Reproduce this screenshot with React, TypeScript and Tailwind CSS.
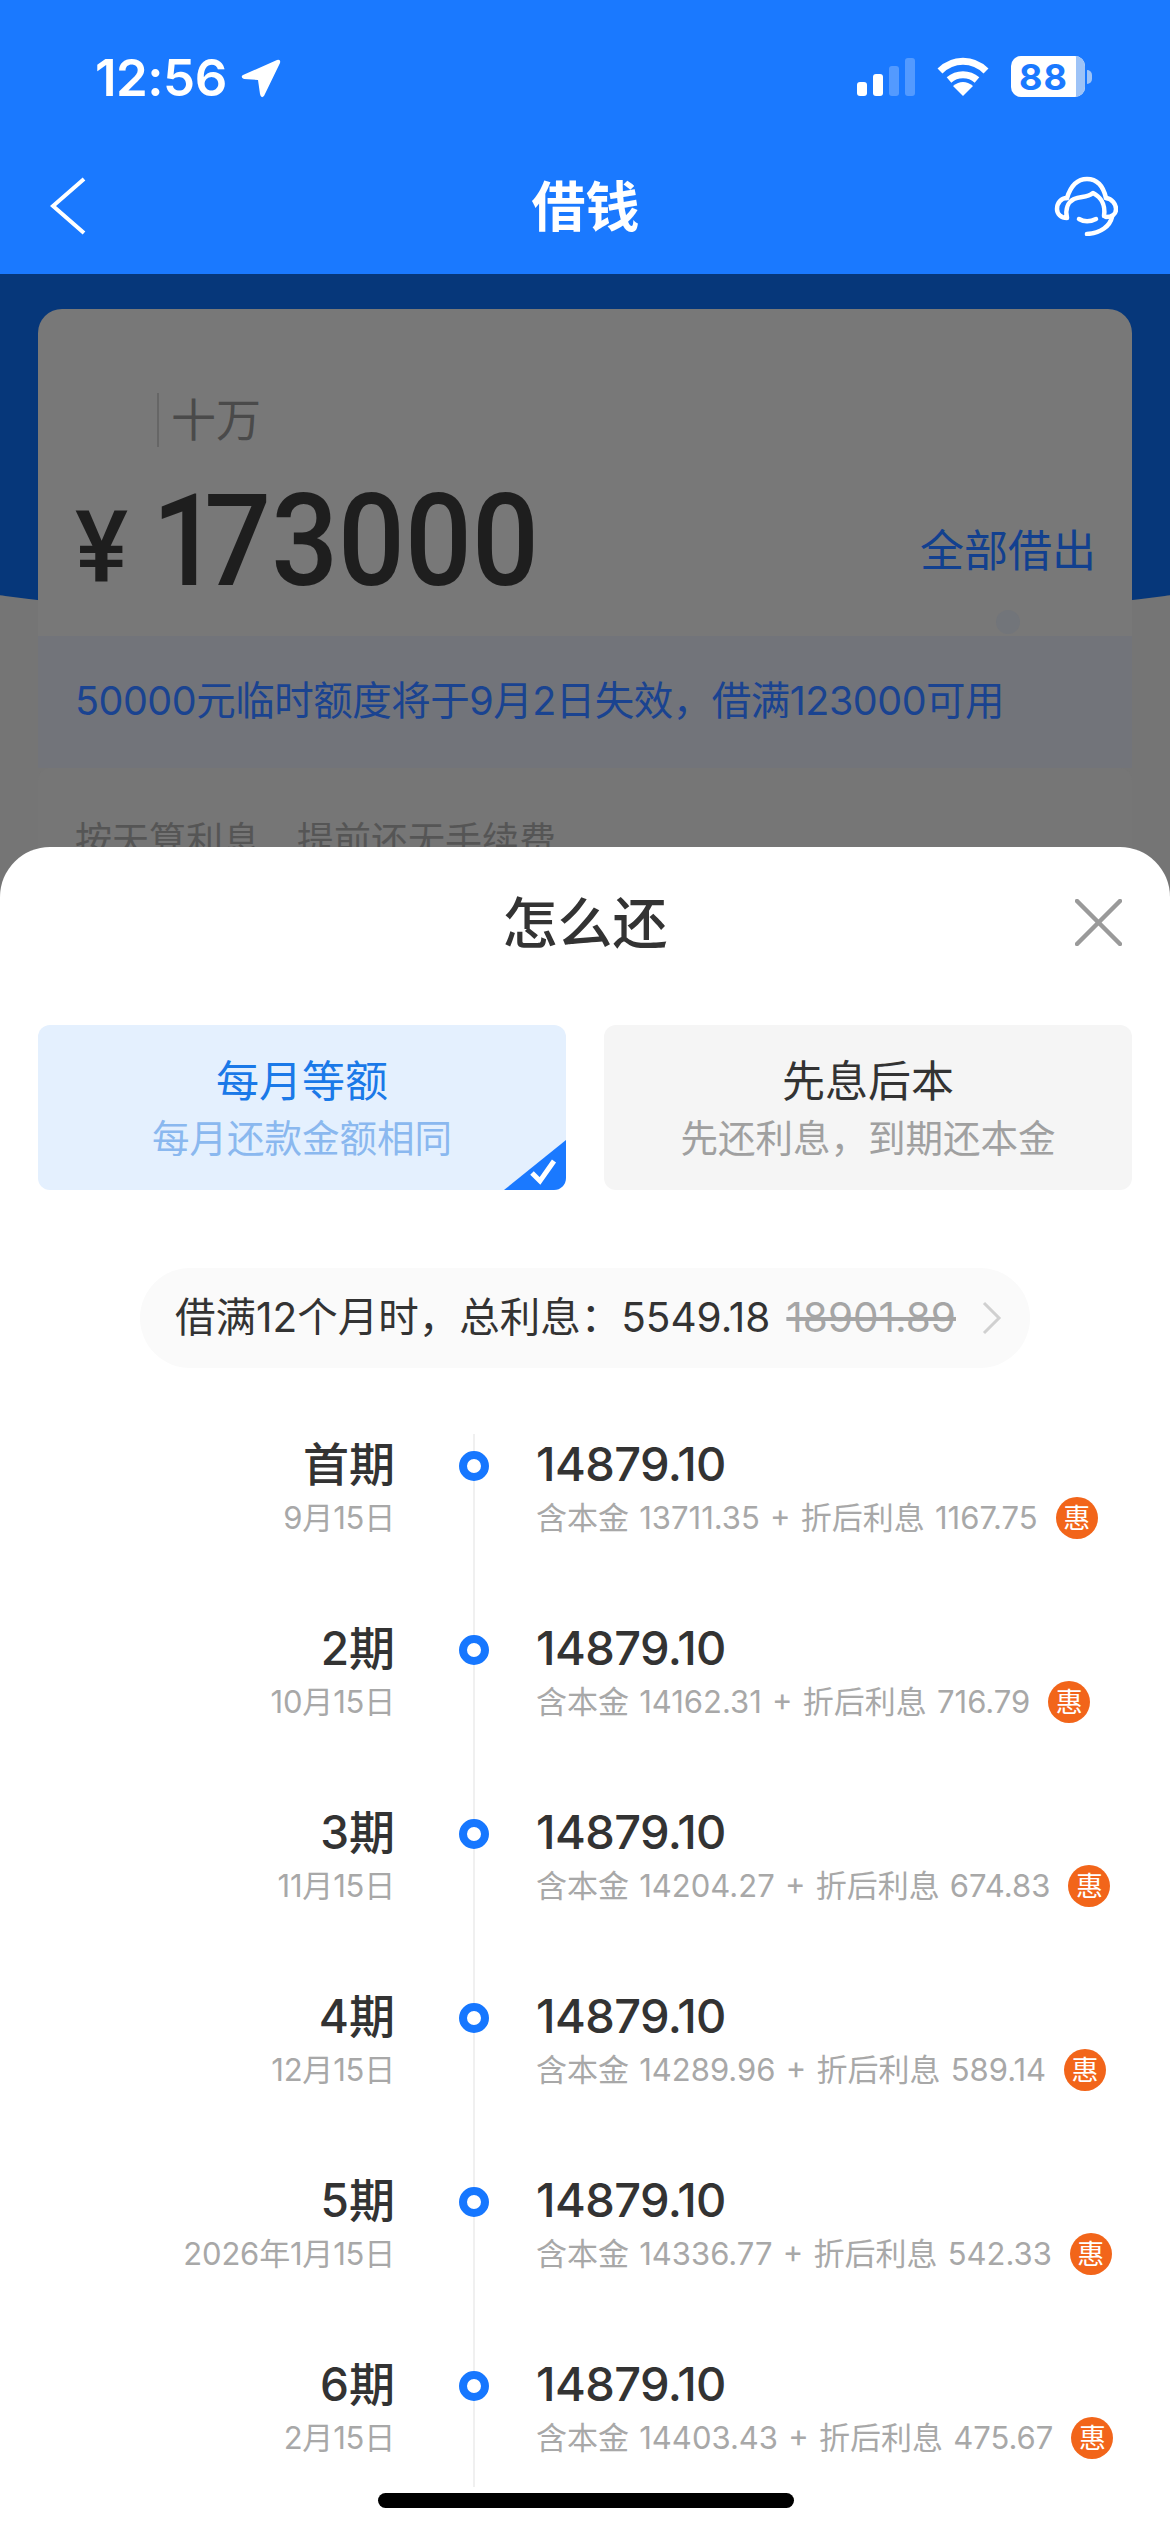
const rows = [
  { p: "首期", d: "9月15日", a: "13711.35", b: "1167.75" },
  { p: "2期", d: "10月15日", a: "14162.31", b: "716.79" },
  { p: "3期", d: "11月15日", a: "14204.27", b: "674.83" },
  { p: "4期", d: "12月15日", a: "14289.96", b: "589.14" },
  { p: "5期", d: "2026年1月15日", a: "14336.77", b: "542.33" },
  { p: "6期", d: "2月15日", a: "14403.43", b: "475.67" },
];

function Row({ r }: { r: (typeof rows)[number] }) {
  return (
    <div className="relative flex h-[184px]">
      <div className="w-[395px] text-right">
        <div className="h-[60px] text-[46px] leading-[60px] font-medium text-[#333333]">{r.p}</div>
        <div className="h-[48px] text-[31px] leading-[48px] tracking-[-0.2px] text-[#a8a8a8]">{r.d}</div>
      </div>
      <div className="w-[141px] pl-[64px] pt-[17px]">
        <div className="h-[30px] w-[30px] rounded-full border-[8px] border-[#1677ff] bg-white" />
      </div>
      <div>
        <div className="h-[60px] text-[47px] leading-[60px] font-medium tracking-[-0.6px] text-[#333333]">14879.10</div>
        <div className="flex h-[48px] items-center text-[31px] leading-[48px] [word-spacing:1.5px] text-[#a8a8a8]">
          <span>含本金 {r.a} + 折后利息 {r.b}</span>
          <span className="ml-[18px] flex h-[42px] w-[42px] items-center justify-center rounded-full bg-[#f2651a] text-[27px] leading-none text-white">惠</span>
        </div>
      </div>
    </div>
  );
}

export default function App() {
  return (
    <div className="flex h-[2532px] w-[1170px] flex-col overflow-hidden bg-white font-[Inter,'Noto_Sans_CJK_SC',sans-serif]">
      <header className="h-[274px] shrink-0 bg-[#1a79ff] text-white">
        <div className="flex h-[156px] items-start justify-between pl-[95px] pr-[78px] pt-[50px]">
          <div className="flex items-start gap-[14px]">
            <span className="text-[51px] leading-[56px] font-semibold tracking-[-0.5px]">12:56</span>
            <svg className="mt-[9px]" width="40" height="40" viewBox="0 0 40 40" fill="white">
              <path d="M36 1 Q40 0 39 4 L23 37 Q20 40 19 35 L17 21 L3 20 Q-1 18 2 16 Z" />
            </svg>
          </div>
          <div className="flex items-start gap-[22px] pt-[6px]">
            <svg width="58" height="40" viewBox="0 0 58 40" className="mt-[2px]">
              <rect x="0" y="24" width="10" height="14" rx="3" fill="white" />
              <rect x="16" y="16" width="10" height="22" rx="3" fill="white" />
              <rect x="32" y="8" width="10" height="30" rx="3" fill="white" fillOpacity="0.25" />
              <rect x="48" y="0" width="10" height="38" rx="3" fill="white" fillOpacity="0.25" />
            </svg>
            <svg width="52" height="40" viewBox="0 0 52 40" className="mt-[1px]" fill="none" stroke="white" strokeWidth="7">
              <path d="M3 14 C16 1 36 1 49 14" />
              <path d="M12 23 C20 16 32 16 40 23" />
              <path d="M16 29 L26 39 L36 29 Q26 21 16 29 Z" fill="white" stroke="none" />
            </svg>
            <div className="flex items-center">
              <div className="flex h-[41px] w-[74px] items-center overflow-hidden rounded-[10px] bg-white">
                <div className="flex h-full w-[65px] items-center justify-center text-[36px] leading-none font-bold tracking-[1px] text-[#1a79ff]">88</div>
                <div className="h-full flex-1 bg-[#9dc3f7]" />
              </div>
              <div className="ml-[2px] h-[14px] w-[5px] rounded-r-[5px] bg-[#9dc3f7]" />
            </div>
          </div>
        </div>
        <div className="flex h-[100px] items-center justify-between pl-[50px] pr-[52px]">
          <div className="w-[64px]">
            <svg width="36" height="58" viewBox="0 0 36 58" fill="none" stroke="white" strokeWidth="4">
              <path d="M34 2 L3 29 L34 56" />
            </svg>
          </div>
          <span className="ml-[3px] mt-[4px] text-[54px] leading-none font-semibold">借钱</span>
          <svg width="64" height="60" viewBox="0 0 64 60" fill="none" stroke="white" strokeWidth="4.5" strokeLinecap="round" strokeLinejoin="round">
            <path d="M13 22 C17 9 24 3 33 3 C42 3 49 9 52 22" />
            <path d="M13 22 C7 22 3 27 3 33 C3 38 7 42 13 42 C11 33 14 26 20 23 C27 20 33 22 39 17 C45 20 52 27 50 40" />
            <path d="M52 22 C58 23 62 28 62 33 C62 38 58 41 52 41" />
            <path d="M58 41 C56 50 47 57 33 58" />
            <path d="M25 43 C30 46 36 46 42 43" />
          </svg>
        </div>
      </header>

      <div className="relative h-[633px] shrink-0 overflow-hidden bg-[#757575]">
        <div className="absolute left-[-165px] top-0 h-[352px] w-[1500px] rounded-b-[750px_82px] bg-[#06377a]" />
        <div className="relative mx-[38px] mt-[35px]">
          <div className="relative h-[327px] rounded-t-[24px] bg-[#787878] pl-[40px] pr-[36px] pt-[84px]">
            <div className="ml-[79px] flex h-[54px] items-center border-l-2 border-[#666666] pl-[12px] text-[45px] leading-none text-[#4a4a4a]">十万</div>
            <div className="mt-[39px] flex items-center justify-between">
              <div className="flex items-start font-[Roboto,sans-serif] font-medium text-[#1e1e1e]">
                <span className="ml-[-3px] mt-[7px] w-[77px] text-[100px] leading-[110px]">¥</span>
                <span className="inline-block origin-left scale-x-[0.92] text-[128px] leading-[110px]">
                  <span className="tracking-[-16px]">1</span>73000
                </span>
              </div>
              <span className="mt-[12px] text-[44px] leading-none text-[#12408f]">全部借出</span>
            </div>
            <div className="absolute bottom-[2px] left-[958px] h-[24px] w-[24px] rounded-full bg-[#72757a]" />
          </div>
          <div className="flex h-[132px] items-center bg-[#72747a] pl-[37px] text-[39.5px] leading-none tracking-[-0.5px] text-[#1a4390]">50000元临时额度将于9月2日失效&#xFF0C;借满123000可用</div>
          <div className="h-[120px] rounded-t-[12px] bg-[#767676] pl-[37px] pt-[54px] text-[37px] leading-none text-[#555555]">按天算利息&#x3000;提前还无手续费</div>
        </div>
      </div>

      <main className="relative z-10 -mt-[60px] flex-1 overflow-hidden rounded-t-[50px] bg-white">
        <div className="relative flex h-[152px] items-center justify-center">
          <h1 className="text-[55px] leading-none font-medium text-[#333333]">怎么还</h1>
          <svg className="absolute left-[1075px] top-[52px]" width="47" height="47" viewBox="0 0 47 47" stroke="#9a9a9a" strokeWidth="4.5" strokeLinecap="round">
            <path d="M2 2 L45 45" />
            <path d="M45 2 L2 45" />
          </svg>
        </div>

        <div className="mx-[38px] mt-[26px] flex gap-[38px]">
          <div className="relative flex h-[165px] flex-1 flex-col items-center overflow-hidden rounded-[12px] bg-[#e4f0fe] pt-[30px]">
            <div className="text-[43px] leading-[52px] text-[#1a79e8]">每月等额</div>
            <div className="mt-[9px] text-[37.5px] leading-[46px] text-[#8ab8ef]">每月还款金额相同</div>
            <svg className="absolute bottom-0 right-0" width="62" height="50" viewBox="0 0 62 50">
              <path d="M62 0 L62 50 L0 50 Z" fill="#1a79ff" />
              <path d="M28 33 L36 41 L50 21" fill="none" stroke="white" strokeWidth="5" />
            </svg>
          </div>
          <div className="flex h-[165px] flex-1 flex-col items-center rounded-[12px] bg-[#f5f5f5] pt-[30px]">
            <div className="text-[43px] leading-[52px] text-[#333333]">先息后本</div>
            <div className="mt-[9px] text-[37.5px] leading-[46px] text-[#a0a0a0]">先还利息&#xFF0C;到期还本金</div>
          </div>
        </div>

        <div className="mx-[140px] mt-[78px] flex h-[100px] items-center rounded-full bg-[#fafafa] pl-[35px] text-[40.5px] leading-none text-[#333333]">
          <span>借满12个月时&#xFF0C;总利息&#xFF1A;5549.18</span>
          <span className="ml-[16px] text-[#a5a5a5] line-through">18901.89</span>
          <svg className="ml-[26px]" width="20" height="34" viewBox="0 0 20 34" fill="none" stroke="#d0d0d0" strokeWidth="3">
            <path d="M2 2 L17 17 L2 32" />
          </svg>
        </div>

        <div className="relative mt-[66px]">
          <div className="absolute left-[473px] top-0 h-[1053px] w-[2px] bg-[#f0f0f0]" />
          {rows.map((r) => (
            <Row key={r.p} r={r} />
          ))}
        </div>

        <div className="absolute bottom-[24px] left-[378px] h-[15px] w-[416px] rounded-full bg-black" />
      </main>
    </div>
  );
}
